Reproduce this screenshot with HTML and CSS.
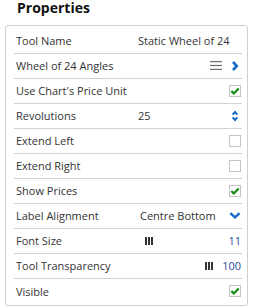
FILE: index.html
```html
<!DOCTYPE html>
<html lang="en">
  <head>
    <title>Properties</title>
    <link rel="stylesheet" href="styles.css">
  </head>
  <body>
    <h1 class="title">Properties</h1>
    <div class="panel">
      <div class="row">
        <span class="label">Tool Name</span>
        <span class="value">Static Wheel of 24</span>
      </div>
      <div class="row">
        <span class="label">Wheel of 24 Angles</span>
        <span class="fill"></span>
        <svg class="menu" width="12" height="9" viewBox="0 0 12 9">
          <rect x="0" y="0" width="12" height="1.2" fill="#6f6f6f"/>
          <rect x="0" y="3.9" width="12" height="1.2" fill="#6f6f6f"/>
          <rect x="0" y="7.8" width="12" height="1.2" fill="#6f6f6f"/>
        </svg>
        <svg class="icon" width="12" height="10" viewBox="0 0 12 10">
          <polyline points="4,1 7.8,5 4,9" fill="none" stroke="#1569c7" stroke-width="2.6"/>
        </svg>
      </div>
      <div class="row">
        <span class="label">Use Chart's Price Unit</span>
        <span class="fill"></span>
        <span class="check on"></span>
      </div>
      <div class="row">
        <span class="label">Revolutions</span>
        <span class="value">25</span>
        <svg class="icon" width="12" height="12" viewBox="0 0 12 12">
          <polyline points="3.6,4.6 6,2 8.4,4.6" fill="none" stroke="#1569c7" stroke-width="2"/>
          <polyline points="3.6,7.4 6,10 8.4,7.4" fill="none" stroke="#1569c7" stroke-width="2"/>
        </svg>
      </div>
      <div class="row">
        <span class="label">Extend Left</span>
        <span class="fill"></span>
        <span class="check"></span>
      </div>
      <div class="row">
        <span class="label">Extend Right</span>
        <span class="fill"></span>
        <span class="check"></span>
      </div>
      <div class="row">
        <span class="label">Show Prices</span>
        <span class="fill"></span>
        <span class="check on"></span>
      </div>
      <div class="row">
        <span class="label">Label Alignment</span>
        <span class="value select">Centre Bottom</span>
        <svg class="icon" width="12" height="7" viewBox="0 0 12 7">
          <polyline points="1.4,1.2 6,5.4 10.6,1.2" fill="none" stroke="#1569c7" stroke-width="2.4"/>
        </svg>
      </div>
      <div class="row">
        <span class="label">Font Size</span>
        <span class="track"><span class="thumb" style="margin-left: 10%"></span></span>
        <span class="num">11</span>
      </div>
      <div class="row">
        <span class="label">Tool Transparency</span>
        <span class="track"><span class="thumb" style="margin-left: 100%"></span></span>
        <span class="num">100</span>
      </div>
      <div class="row">
        <span class="label">Visible</span>
        <span class="fill"></span>
        <span class="check on"></span>
      </div>
    </div>
  </body>
</html>
```

FILE: styles.css
```css
body {
  margin: 0;
  font-family: "Open Sans", "Liberation Sans", sans-serif;
  color: #333;
  background-color: #fff;
}
.title {
  margin: 0 0 9px 0;
  padding-left: 17px;
  font-size: 14px;
  line-height: 16px;
  font-weight: 700;
  color: #111;
}
.panel {
  margin: 0 6px 0 5px;
  padding: 3px 5px 1px 8px;
  border: 1px solid #d0d0d0;
  border-radius: 3px;
}
.row {
  display: flex;
  align-items: center;
  box-sizing: border-box;
  height: 25px;
  padding: 0 1px 1px 2px;
  border-bottom: 1px solid #d3d3d3;
  font-size: 11px;
}
.row:last-child {
  border-bottom: none;
}
.label {
  width: 122px;
  flex-shrink: 0;
}
.value {
  flex: 1;
}
.value.select {
  padding-left: 2px;
}
.fill {
  flex: 1;
}
.menu {
  margin-right: 7px;
}
.icon {
  display: block;
  width: 12px;
}
.check {
  width: 10px;
  height: 10px;
  border: 1px solid #c4c4c4;
  background-color: #fff;
}
.check.on {
  background: #fff url("data:image/svg+xml;utf8,<svg xmlns='http://www.w3.org/2000/svg' width='10' height='10' viewBox='0 0 10 10'><polyline points='1.3,5 3.8,7.4 8.7,2.4' fill='none' stroke='%23168a16' stroke-width='2.2'/></svg>") no-repeat center;
}
.track {
  flex: 1;
  min-width: 0;
  display: flex;
  align-items: center;
  padding-right: 8px;
}
.thumb {
  flex-shrink: 0;
  width: 8px;
  height: 8px;
  background: linear-gradient(to right, #333 0 2px, transparent 2px 3px, #333 3px 5px, transparent 5px 6px, #333 6px 8px);
}
.num {
  margin-left: 9px;
  color: #1f4a96;
}
```
